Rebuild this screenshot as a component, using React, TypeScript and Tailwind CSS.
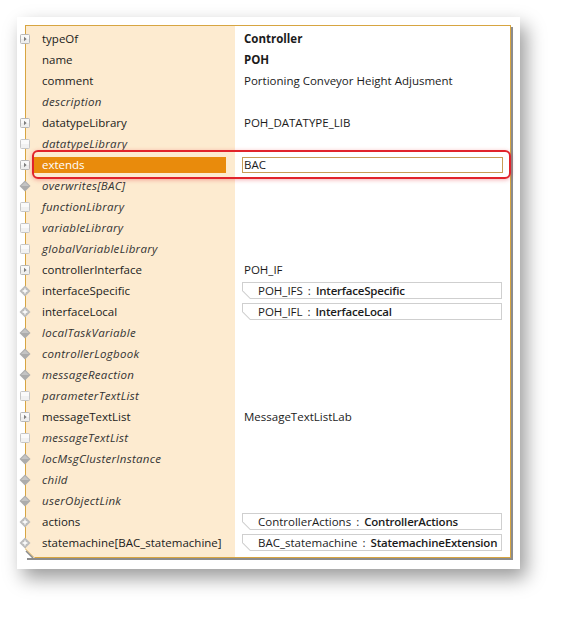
import React from 'react';

type Icon = 'expand' | 'box' | 'diamond' | 'plus' | null;

type Row = {
  label: string;
  italic?: boolean;
  icon: Icon;
  value?: string;
  bold?: boolean;
  chip?: [string, string];
  input?: boolean;
};

// property sheet rows, top to bottom
const rows: Row[] = [
  { label: 'typeOf', icon: 'expand', value: 'Controller', bold: true },
  { label: 'name', icon: null, value: 'POH', bold: true },
  { label: 'comment', icon: null, value: 'Portioning Conveyor Height Adjusment' },
  { label: 'description', icon: null, italic: true },
  { label: 'datatypeLibrary', icon: 'expand', value: 'POH_DATATYPE_LIB' },
  { label: 'datatypeLibrary', icon: 'box', italic: true },
  { label: 'extends', icon: 'expand', input: true, value: 'BAC' },
  { label: 'overwrites[BAC]', icon: 'diamond', italic: true },
  { label: 'functionLibrary', icon: 'box', italic: true },
  { label: 'variableLibrary', icon: 'box', italic: true },
  { label: 'globalVariableLibrary', icon: 'box', italic: true },
  { label: 'controllerInterface', icon: 'expand', value: 'POH_IF' },
  { label: 'interfaceSpecific', icon: 'plus', chip: ['POH_IFS', 'InterfaceSpecific'] },
  { label: 'interfaceLocal', icon: 'plus', chip: ['POH_IFL', 'InterfaceLocal'] },
  { label: 'localTaskVariable', icon: 'diamond', italic: true },
  { label: 'controllerLogbook', icon: 'diamond', italic: true },
  { label: 'messageReaction', icon: 'diamond', italic: true },
  { label: 'parameterTextList', icon: 'box', italic: true },
  { label: 'messageTextList', icon: 'expand', value: 'MessageTextListLab' },
  { label: 'messageTextList', icon: 'box', italic: true },
  { label: 'locMsgClusterInstance', icon: 'diamond', italic: true },
  { label: 'child', icon: 'diamond', italic: true },
  { label: 'userObjectLink', icon: 'diamond', italic: true },
  { label: 'actions', icon: 'plus', chip: ['ControllerActions', 'ControllerActions'] },
  { label: 'statemachine[BAC_statemachine]', icon: 'plus', chip: ['BAC_statemachine', 'StatemachineExtension'] },
];

function RowIcon({ kind }: { kind: Icon }) {
  if (!kind) return <span className="w-[12px] h-[12px] -ml-[7px] shrink-0" />;
  return (
    <svg width="12" height="12" viewBox="0 0 12 12" className="-ml-[7px] shrink-0">
      {kind === 'expand' && (
        <>
          <rect x="1.5" y="1.5" width="9" height="9" rx="1" fill="#eeeeee" stroke="#b8b8b8" />
          <rect x="2" y="2" width="8" height="4" fill="#f9f9f9" />
          <path d="M5 3.8 L7.6 6 L5 8.2 Z" fill="#7c7c7c" />
        </>
      )}
      {kind === 'box' && (
        <>
          <rect x="1.5" y="1.5" width="9" height="9" rx="1" fill="#f1f1f1" stroke="#c6c6c6" />
          <rect x="2" y="2" width="8" height="4" fill="#fafafa" />
        </>
      )}
      {kind === 'diamond' && (
        <>
          <path d="M6 0.5 L11.5 6 L6 11.5 L0.5 6 Z" fill="#acacac" />
          <path d="M6 2 L10 6 L2 6 Z" fill="#c4c4c4" />
        </>
      )}
      {kind === 'plus' && (
        <>
          <path d="M6 0.5 L11.5 6 L6 11.5 L0.5 6 Z" fill="#bcbcbc" />
          <path d="M6 3.6 V8.4 M3.6 6 H8.4" stroke="#ffffff" strokeWidth="1.3" />
        </>
      )}
    </svg>
  );
}

function Chip({ name, type }: { name: string; type: string }) {
  return (
    <div className="h-[17px] w-[260px] bg-[#cfcfcf] [clip-path:polygon(0_0,100%_0,100%_100%,8px_100%,0_9px)]">
      <div className="h-full w-full overflow-hidden bg-white [clip-path:polygon(1px_1px,calc(100%-1px)_1px,calc(100%-1px)_calc(100%-1px),8.4px_calc(100%-1px),1px_8.6px)] flex items-center pl-[16px] whitespace-nowrap">
        <span>{name}</span>
        <span className="mx-[5px]">:</span>
        <span className="font-semibold tracking-[-0.2px]">{type}</span>
      </div>
    </div>
  );
}

export default function App() {
  return (
    <div className="w-[568px] h-[618px] bg-white overflow-hidden pt-[17px] pl-[17px] text-[11.5px] text-[#1b1b1b] font-['Open_Sans','Noto_Sans',sans-serif]">
      <div className="w-[503px] h-[552px] bg-white p-[8px] shadow-[6px_9px_18px_rgba(0,0,0,0.4)]">
        <div className="relative w-[486px] h-[533px] border border-[#d7a541] shadow-[2px_2px_0_#8c8c8c] pt-[2px] bg-[linear-gradient(to_right,#fdebd0_209px,#ffffff_209px)]">
          {rows.map((r, i) => (
            <div key={i} className="flex h-[21px] items-center">
              <div className="w-[209px] h-full flex items-center shrink-0">
                <RowIcon kind={r.icon} />
                {r.input ? (
                  <div className="ml-[3px] w-[192px] h-[16px] bg-[#e98b0c] text-white pl-[8px] flex items-center">
                    {r.label}
                  </div>
                ) : (
                  <span className={`ml-[11px] whitespace-nowrap ${r.italic ? 'italic text-[#333333] tracking-[0.3px]' : ''}`}>
                    {r.label}
                  </span>
                )}
              </div>
              <div className="flex-1 h-full flex items-center pl-[7px]">
                {r.input && (
                  <div className="w-[261px] h-[16px] border border-[#c99c55] bg-white flex items-center pl-[1px]">
                    {r.value}
                  </div>
                )}
                {r.chip && <Chip name={r.chip[0]} type={r.chip[1]} />}
                {!r.input && !r.chip && r.value && (
                  <span className={`pl-[2px] whitespace-nowrap ${r.bold ? 'font-bold' : ''}`}>{r.value}</span>
                )}
              </div>
            </div>
          ))}

          {/* bevelled bottom-left corner */}
          <svg width="10" height="10" viewBox="0 0 10 10" className="absolute -left-[1px] -bottom-[1px]">
            <path d="M0 0 V10 H10 Z" fill="#ffffff" />
            <path d="M0.5 1 L9 9.5" stroke="#d7a541" strokeWidth="1" />
            <path d="M1 3 L8 10" stroke="#8c8c8c" strokeWidth="1.5" />
          </svg>

          {/* red annotation around the extends row */}
          <div className="absolute left-[6px] top-[124px] w-[479px] h-[29px] rounded-[6px] border-2 border-[#e1232b] shadow-[0_1px_4px_rgba(225,35,43,0.35)]" />
        </div>
      </div>
    </div>
  );
}
